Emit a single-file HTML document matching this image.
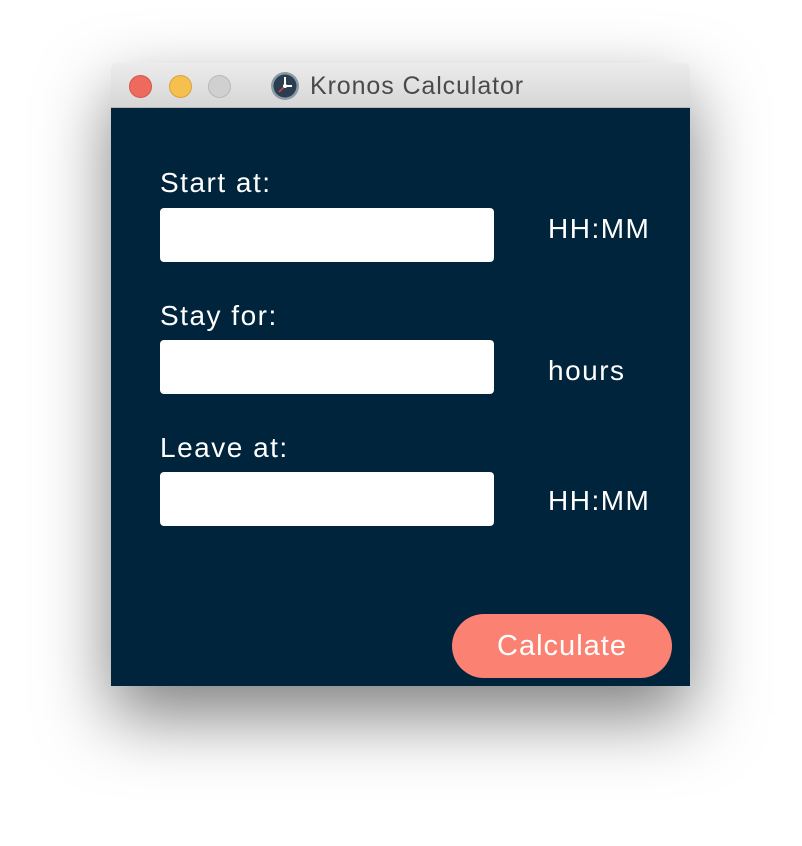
<!DOCTYPE html>
<html><head><style>
body{margin:0;width:802px;height:846px;background:#fff;position:relative;font-family:"Liberation Sans",sans-serif;overflow:hidden}
.win{position:absolute;left:111px;top:63px;width:579px;height:623px;border-radius:6px 6px 0 0;box-shadow:0 30px 70px rgba(0,0,0,.5);overflow:hidden}
.tb{height:44px;background:linear-gradient(#ececec,#d6d6d6);border-bottom:1px solid #b8b8b8;position:relative}
.dot{position:absolute;top:12px;width:23px;height:23px;border-radius:50%;box-sizing:border-box}
.title{position:absolute;left:199px;top:9px;font-size:25px;color:#4a4a4a;letter-spacing:0.9px}
.body{position:absolute;top:45px;left:0;right:0;bottom:0;background:#00243b;color:#fff}
.lbl{position:absolute;left:49px;font-size:28px;letter-spacing:1.5px}
.in{position:absolute;left:49px;width:334px;height:54px;background:#fff;border-radius:4px}
.u{position:absolute;left:437px;font-size:28px;letter-spacing:1.5px}
.btn{position:absolute;left:341px;top:506px;width:220px;height:64px;border-radius:32px;background:#fb8173;font-size:29px;text-align:center;line-height:64px;letter-spacing:1px}
</style></head><body>
<div class="win">
<div class="tb">
<div class="dot" style="left:18px;background:#ee6a5e;border:1px solid #d5554a"></div>
<div class="dot" style="left:58px;background:#f6c04f;border:1px solid #d9a23a"></div>
<div class="dot" style="left:97px;background:#d0d0d0;border:1px solid #b8b8b8"></div>
<svg style="position:absolute;left:159px;top:8px" width="30" height="30" viewBox="0 0 30 30"><circle cx="15" cy="15" r="14" fill="#8a9aa4"/><circle cx="15" cy="15" r="11.5" fill="#2b3d50"/><path d="M15 6V15H22" stroke="#fff" stroke-width="2" fill="none"/><path d="M15 15L9 21" stroke="#e0443a" stroke-width="1.5"/><circle cx="15" cy="15" r="2" fill="#fff"/></svg>
<div class="title">Kronos Calculator</div>
</div>
<div class="body">
<div class="lbl" style="top:59px">Start at:</div>
<div class="in" style="top:100px"></div>
<div class="u" style="top:105px">HH:MM</div>
<div class="lbl" style="top:192px">Stay for:</div>
<div class="in" style="top:232px"></div>
<div class="u" style="top:247px">hours</div>
<div class="lbl" style="top:324px">Leave at:</div>
<div class="in" style="top:364px"></div>
<div class="u" style="top:377px">HH:MM</div>
<div class="btn">Calculate</div>
</div>
</div>
</body></html>
